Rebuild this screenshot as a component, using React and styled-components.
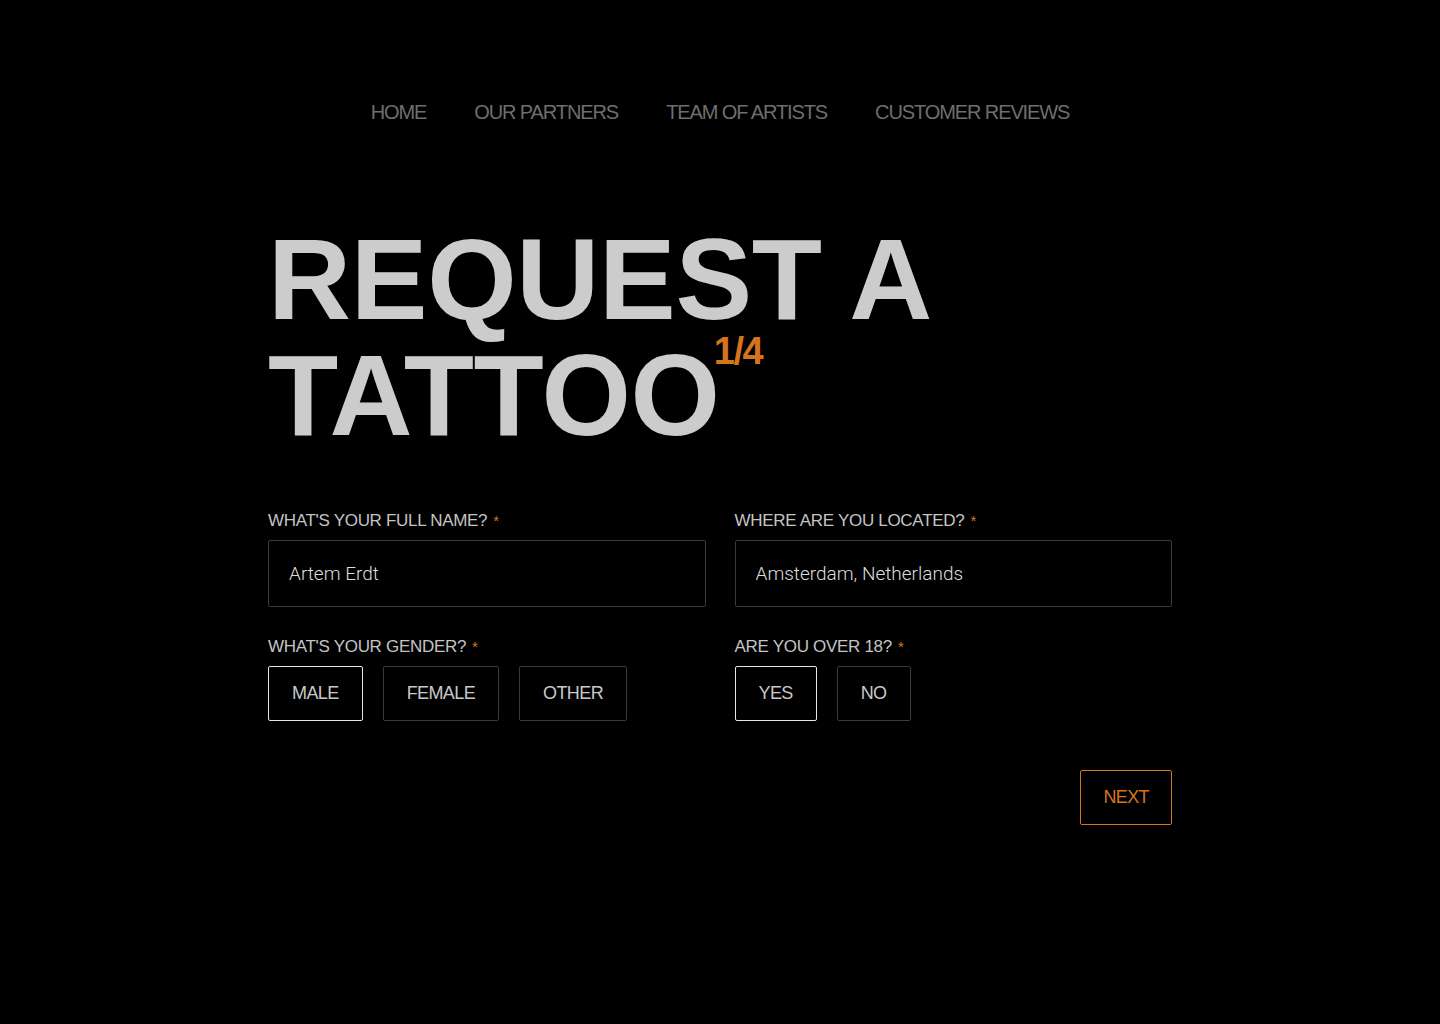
import { useState } from 'react';
import styled, { createGlobalStyle } from 'styled-components';

const GlobalStyle = createGlobalStyle`
    html, body {
        margin: 0;
        padding: 0;
        background: #000;
    }
    body {
        font-family: 'Liberation Sans', Arial, sans-serif;
        color: #cccccc;
    }
`;

const navItems = ['HOME', 'OUR PARTNERS', 'TEAM OF ARTISTS', 'CUSTOMER REVIEWS'];

const Page = styled.div`
    min-height: 1024px;
    display: flex;
    flex-direction: column;
    align-items: center;
`;

const Nav = styled.nav`
    display: flex;
    gap: 48px;
    padding-top: 99px;
`;

const NavLink = styled.a`
    font-size: 20px;
    line-height: 26px;
    letter-spacing: -1.1px;
    color: #6e6e6e;
    text-decoration: none;
    cursor: pointer;
`;

const Main = styled.main`
    width: 904px;
    margin-top: 96px;
`;

const Title = styled.h1`
    margin: 0;
    font-size: 115px;
    line-height: 116px;
    font-weight: 700;
    letter-spacing: -0.3px;
    color: #cccccc;
`;

const Line = styled.span`
    display: block;
`;

const Step = styled.sup`
    font-size: 38px;
    line-height: 30px;
    letter-spacing: -1.5px;
    color: #d4751e;
    vertical-align: top;
    position: relative;
    top: -1px;
    margin-left: -6px;
`;

const Form = styled.form`
    margin-top: 58px;
    display: grid;
    grid-template-columns: 1fr 1fr;
    column-gap: 29px;
    row-gap: 30px;
`;

const Field = styled.div`
    display: flex;
    flex-direction: column;
    gap: 9px;
`;

const Label = styled.label`
    font-size: 17px;
    line-height: 20px;
    letter-spacing: -0.3px;
    color: #c4c4c4;
`;

const Required = styled.span`
    color: #d4751e;
    font-size: 15px;
    margin-left: 6px;
    vertical-align: top;
`;

const Input = styled.input`
    box-sizing: border-box;
    height: 67px;
    width: 100%;
    background: #000;
    border: 1px solid #3a3a3a;
    border-radius: 2px;
    padding: 0 20px;
    font-family: Roboto, 'Liberation Sans', sans-serif;
    font-weight: 300;
    font-size: 19px;
    color: #dddddd;
    outline: none;
`;

const Options = styled.div`
    display: flex;
    gap: 20px;
`;

const Option = styled.button`
    box-sizing: border-box;
    height: 55px;
    padding: 0 23px;
    background: #000;
    border: 1px solid ${(p) => (p.$active ? '#e6e6e6' : '#3a3a3a')};
    border-radius: 2px;
    font-family: 'Liberation Sans', Arial, sans-serif;
    font-size: 18px;
    letter-spacing: -0.6px;
    color: #c8c8c8;
    cursor: pointer;
`;

const Actions = styled.div`
    grid-column: 1 / -1;
    display: flex;
    justify-content: flex-end;
    margin-top: 19px;
`;

const NextButton = styled.button`
    box-sizing: border-box;
    height: 55px;
    padding: 0 22px;
    background: transparent;
    border: 1px solid #d4751e;
    border-radius: 2px;
    font-family: 'Liberation Sans', Arial, sans-serif;
    font-size: 18px;
    letter-spacing: -0.6px;
    color: #d4751e;
    cursor: pointer;
`;

export default function App() {
    const [name, setName] = useState('Artem Erdt');
    const [location, setLocation] = useState('Amsterdam, Netherlands');
    const [gender, setGender] = useState('MALE');
    const [adult, setAdult] = useState('YES');

    return (
        <>
            <GlobalStyle />
            <Page>
                <Nav>
                    {navItems.map((item) => (
                        <NavLink key={item}>{item}</NavLink>
                    ))}
                </Nav>
                <Main>
                    <Title>
                        <Line>REQUEST A</Line>
                        <Line>
                            TATTOO<Step>1/4</Step>
                        </Line>
                    </Title>
                    <Form onSubmit={(e) => e.preventDefault()}>
                        <Field>
                            <Label>
                                WHAT'S YOUR FULL NAME?<Required>*</Required>
                            </Label>
                            <Input value={name} onChange={(e) => setName(e.target.value)} />
                        </Field>
                        <Field>
                            <Label>
                                WHERE ARE YOU LOCATED?<Required>*</Required>
                            </Label>
                            <Input
                                value={location}
                                onChange={(e) => setLocation(e.target.value)}
                            />
                        </Field>
                        <Field>
                            <Label>
                                WHAT'S YOUR GENDER?<Required>*</Required>
                            </Label>
                            <Options>
                                {['MALE', 'FEMALE', 'OTHER'].map((g) => (
                                    <Option
                                        type="button"
                                        key={g}
                                        $active={gender === g}
                                        onClick={() => setGender(g)}
                                    >
                                        {g}
                                    </Option>
                                ))}
                            </Options>
                        </Field>
                        <Field>
                            <Label>
                                ARE YOU OVER 18?<Required>*</Required>
                            </Label>
                            <Options>
                                {['YES', 'NO'].map((a) => (
                                    <Option
                                        type="button"
                                        key={a}
                                        $active={adult === a}
                                        onClick={() => setAdult(a)}
                                    >
                                        {a}
                                    </Option>
                                ))}
                            </Options>
                        </Field>
                        <Actions>
                            <NextButton type="submit">NEXT</NextButton>
                        </Actions>
                    </Form>
                </Main>
            </Page>
        </>
    );
}
